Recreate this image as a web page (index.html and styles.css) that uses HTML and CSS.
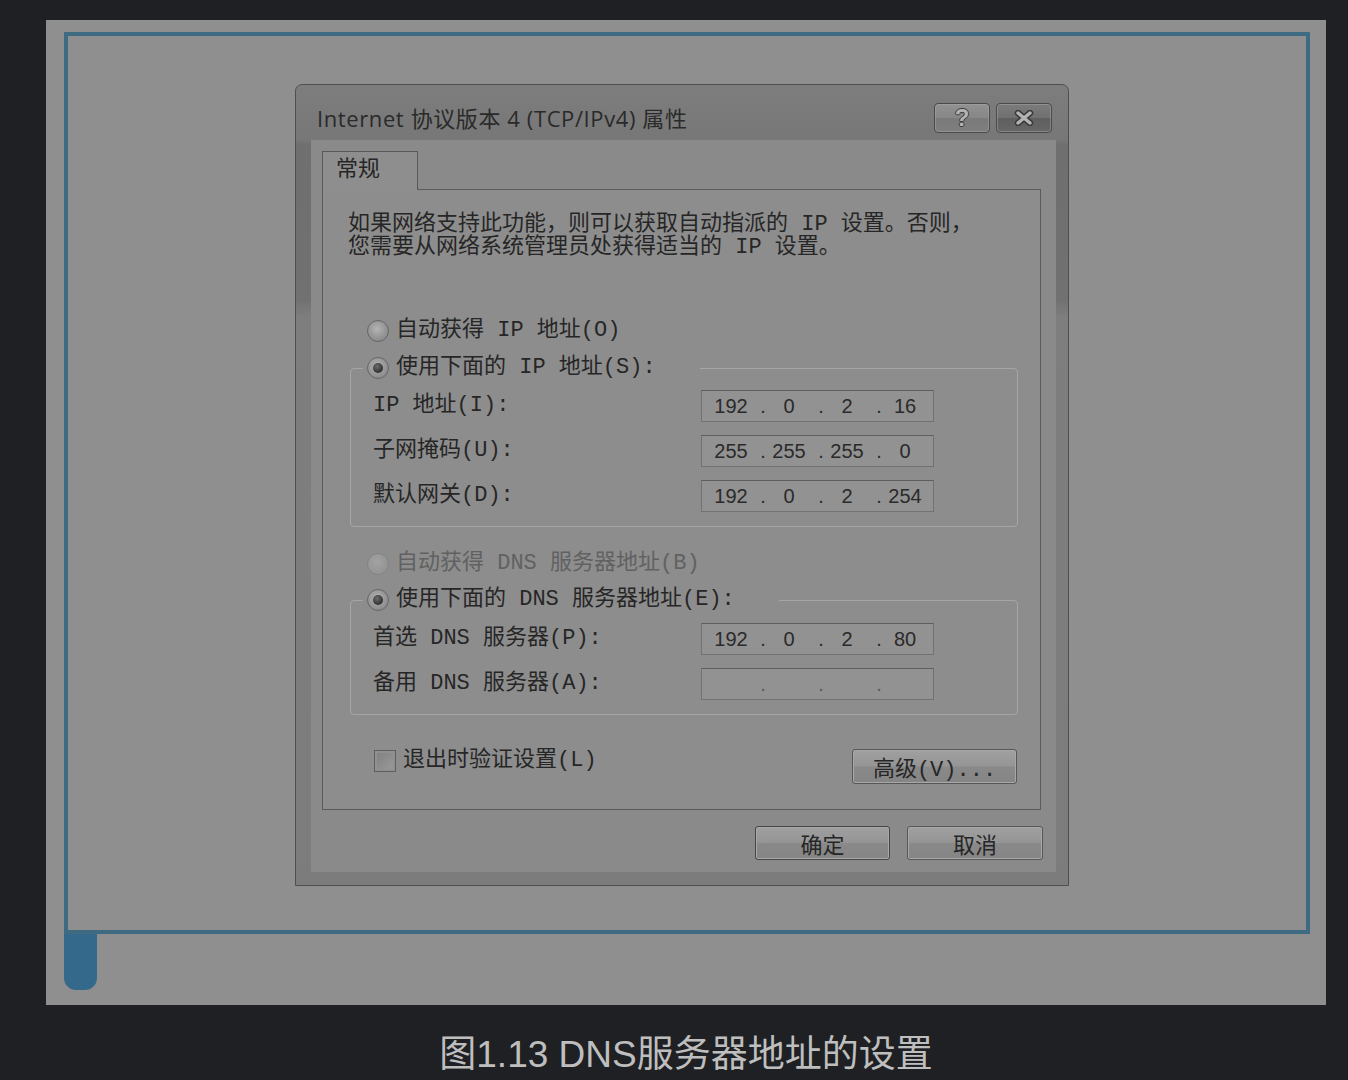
FILE: index.html
```html
<!DOCTYPE html>
<html lang="zh-CN">
<head>
<meta charset="utf-8">
<title>图1.13 DNS服务器地址的设置</title>
<link rel="stylesheet" href="styles.css">
</head>
<body>
<div class="page">
  <div class="shot">
    <div class="frame">
      <div class="dialog">
        <div class="titlebar">
          <div class="title">Internet 协议版本 4 (TCP/IPv4) 属性</div>
          <div class="cbtns">
            <div class="cbtn help">?</div>
            <div class="cbtn close">
              <svg width="24" height="16" viewBox="0 0 24 16">
                <path d="M6 3 L18 13 M18 3 L6 13" stroke="#3a3a3a" stroke-width="6.5" stroke-linecap="round" fill="none"/>
                <path d="M6 3 L18 13 M18 3 L6 13" stroke="#b4b4b4" stroke-width="3.4" stroke-linecap="round" fill="none"/>
              </svg>
            </div>
          </div>
        </div>
        <div class="client">
          <div class="tabs"><div class="tab">常规</div></div>
          <div class="panel">
            <p class="desc">如果网络支持此功能，则可以获取自动指派的 IP 设置。否则，<br>您需要从网络系统管理员处获得适当的 IP 设置。</p>
            <div class="opt opt-first"><span class="radio"></span>自动获得 IP 地址(O)</div>
            <fieldset class="group group-ip">
              <legend class="opt"><span class="radio on"></span>使用下面的 IP 地址(S):</legend>
              <div class="rows">
                <span class="lbl">IP 地址(I):</span>
                <div class="ip"><span class="oct">192</span><span class="dot">.</span><span class="oct">0</span><span class="dot">.</span><span class="oct">2</span><span class="dot">.</span><span class="oct">16</span></div>
                <span class="lbl">子网掩码(U):</span>
                <div class="ip"><span class="oct">255</span><span class="dot">.</span><span class="oct">255</span><span class="dot">.</span><span class="oct">255</span><span class="dot">.</span><span class="oct">0</span></div>
                <span class="lbl">默认网关(D):</span>
                <div class="ip"><span class="oct">192</span><span class="dot">.</span><span class="oct">0</span><span class="dot">.</span><span class="oct">2</span><span class="dot">.</span><span class="oct">254</span></div>
              </div>
            </fieldset>
            <div class="opt opt-dns disabled"><span class="radio"></span>自动获得 DNS 服务器地址(B)</div>
            <fieldset class="group group-dns">
              <legend class="opt"><span class="radio on"></span>使用下面的 DNS 服务器地址(E):</legend>
              <div class="rows">
                <span class="lbl">首选 DNS 服务器(P):</span>
                <div class="ip"><span class="oct">192</span><span class="dot">.</span><span class="oct">0</span><span class="dot">.</span><span class="oct">2</span><span class="dot">.</span><span class="oct">80</span></div>
                <span class="lbl">备用 DNS 服务器(A):</span>
                <div class="ip empty"><span class="oct"></span><span class="dot">.</span><span class="oct"></span><span class="dot">.</span><span class="oct"></span><span class="dot">.</span><span class="oct"></span></div>
              </div>
            </fieldset>
            <div class="bottom-row">
              <div class="check"><span class="box"></span>退出时验证设置(L)</div>
              <button class="btn adv">高级(V)...</button>
            </div>
          </div>
          <div class="actions">
            <button class="btn ok">确定</button>
            <button class="btn cancel">取消</button>
          </div>
        </div>
      </div>
    </div>
    <div class="tabmark"></div>
  </div>
  <div class="figcap">图1.13 DNS服务器地址的设置</div>
</div>
</body>
</html>
```

FILE: styles.css
```css
* { box-sizing: border-box; }
html, body { margin: 0; padding: 0; }
body {
  background: #1f2023;
  width: 1348px;
  height: 1080px;
  overflow: hidden;
}
.page { padding-top: 20px; }

.shot {
  margin-left: 46px;
  width: 1280px;
  height: 985px;
  background: #8f8f8f;
  padding: 12px 0 0 18px;
}
.frame {
  width: 1246px;
  height: 902px;
  border: 4px solid #3e6b81;
  padding: 48px 0 0 227px;
}
.tabmark {
  width: 33px;
  height: 56px;
  background: #35698c;
  border-radius: 0 0 12px 12px;
}

.dialog {
  width: 774px;
  height: 802px;
  border: 1px solid #4f4f4f;
  border-radius: 7px 7px 0 0;
  background: linear-gradient(180deg, #7d7d7d 0px, #777777 55px, #6f6f6f 60px, #717171 215px, #7e7e7e 232px, #7c7c7c 100%);
  display: flex;
  flex-direction: column;
  font-family: "Liberation Mono", "Noto Sans CJK SC", monospace;
  font-size: 22px;
  color: #262626;
}

.titlebar {
  height: 55px;
  display: flex;
  justify-content: space-between;
  align-items: flex-start;
  flex: none;
}
.title {
  margin: 18px 0 0 21px;
  font-family: "Open Sans", "Noto Sans CJK SC", sans-serif;
  font-size: 22px;
  letter-spacing: 0.6px;
  line-height: 30px;
  color: #2a2a2a;
  white-space: nowrap;
}
.cbtns {
  display: flex;
  gap: 6px;
  margin: 18px 16px 0 0;
}
.cbtn {
  width: 56px;
  height: 30px;
  border: 1px solid #4a4a4a;
  border-radius: 4px;
  display: flex;
  align-items: center;
  justify-content: center;
  box-shadow: inset 0 0 0 1px rgba(170,170,170,0.45);
}
.help {
  background: linear-gradient(180deg, #919191 0%, #878787 50%, #7a7a7a 52%, #7f7f7f 100%);
  font-family: "Liberation Sans", sans-serif;
  font-weight: bold;
  font-size: 24px;
  line-height: 28px;
  color: #b3b3b3;
  text-shadow: 1px 0 #3d3d3d, -1px 0 #3d3d3d, 0 1px #3d3d3d, 0 -1px #3d3d3d;
}
.close {
  background: linear-gradient(180deg, #7b7b7b 0%, #707070 50%, #5f5f5f 52%, #676767 100%);
}

.client {
  flex: 1;
  margin: 0 12px 13px 15px;
  background: #8a8a8a;
  padding: 11px 15px 12px 11px;
  display: flex;
  flex-direction: column;
}
.tabs {
  height: 38px;
  display: flex;
  flex: none;
}
.tab {
  position: relative;
  z-index: 1;
  width: 96px;
  height: 39px;
  border: 1px solid #595959;
  border-bottom: none;
  background: #8e8e8e;
  padding-left: 13px;
  line-height: 38px;
}
.panel {
  height: 621px;
  flex: none;
  border: 1px solid #5b5b5b;
  background: #8d8d8d;
  padding: 23px 22px 0 25px;
}
.desc {
  margin: 0;
  line-height: 23px;
  white-space: nowrap;
}

.opt {
  display: flex;
  align-items: center;
  height: 30px;
  line-height: 30px;
  white-space: nowrap;
}
.opt-first { margin: 57px 0 0 19px; }
.opt-dns { margin: 22px 0 0 19px; }
.disabled { color: #616161; }
.radio {
  flex: none;
  width: 22px;
  height: 22px;
  border-radius: 50%;
  border: 1px solid #666666;
  background: radial-gradient(circle at 45% 40%, #b4b4b4 0%, #9a9a9a 45%, #7e7e7e 100%);
  margin-right: 7px;
  display: grid;
  place-items: center;
}
.disabled .radio {
  border-color: #848484;
  background: radial-gradient(circle at 45% 40%, #a2a2a2 0%, #969696 60%, #8c8c8c 100%);
}
.radio.on::after {
  content: "";
  width: 10px;
  height: 10px;
  border-radius: 50%;
  background: radial-gradient(circle at 40% 35%, #6c6c6c 0%, #2c2c2c 75%);
}

.group {
  margin: 7px 0 0 2px;
  border: 1px solid #a6a6a6;
  border-radius: 4px;
  padding: 7px 0 14px 12px;
  min-width: 0;
}
.group-dns {
  margin-top: 6px;
  padding-top: 8px;
}
.group legend {
  padding: 0 44px 0 4px;
}
.rows {
  margin-left: 10px;
  display: grid;
  grid-template-columns: 328px 233px;
  row-gap: 13px;
  align-items: center;
}
.lbl {
  line-height: 32px;
  white-space: nowrap;
}
.ip {
  height: 32px;
  border: 1px solid #727272;
  border-top-color: #5e5e5e;
  background: #929292;
  display: flex;
  align-items: center;
  padding-left: 7px;
  font-family: "Liberation Sans", sans-serif;
  font-size: 20px;
  line-height: 30px;
  color: #2a2a2a;
}
.oct {
  width: 44px;
  text-align: center;
}
.dot {
  width: 14px;
  padding-left: 6px;
  text-align: center;
}
.ip.empty .dot { color: #5a5a5a; }

.bottom-row {
  display: flex;
  justify-content: space-between;
  align-items: flex-start;
  margin: 34px 1px 0 26px;
}
.check {
  display: flex;
  align-items: center;
  height: 24px;
  line-height: 24px;
  white-space: nowrap;
}
.box {
  flex: none;
  width: 22px;
  height: 22px;
  border: 1px solid #5e5e5e;
  background: linear-gradient(135deg, #7e7e7e 0%, #9c9c9c 100%);
  box-shadow: inset 0 0 0 2px #909090;
  margin-right: 7px;
}
.btn {
  margin: 0;
  padding: 0;
  font-family: "Liberation Mono", "Noto Sans CJK SC", monospace;
  font-size: 22px;
  color: #262626;
  border: 1px solid #575757;
  border-radius: 3px;
  background: linear-gradient(180deg, #a0a0a0 0%, #959595 48%, #898989 52%, #858585 100%);
  box-shadow: inset 0 0 0 1px #a8a8a8;
  display: flex;
  align-items: center;
  justify-content: center;
  white-space: nowrap;
}
.adv {
  width: 165px;
  height: 35px;
}
.actions {
  display: flex;
  justify-content: flex-end;
  gap: 17px;
  margin: 16px -2px 0 0;
}
.ok {
  width: 135px;
  height: 34px;
  border-color: #454545;
}
.cancel {
  width: 136px;
  height: 34px;
}

.figcap {
  margin: 26px 0 0 46px;
  width: 1280px;
  text-align: center;
  font-family: "Liberation Sans", "Noto Sans CJK SC", sans-serif;
  font-size: 37px;
  line-height: 48px;
  color: #bebebe;
  white-space: nowrap;
}
```
